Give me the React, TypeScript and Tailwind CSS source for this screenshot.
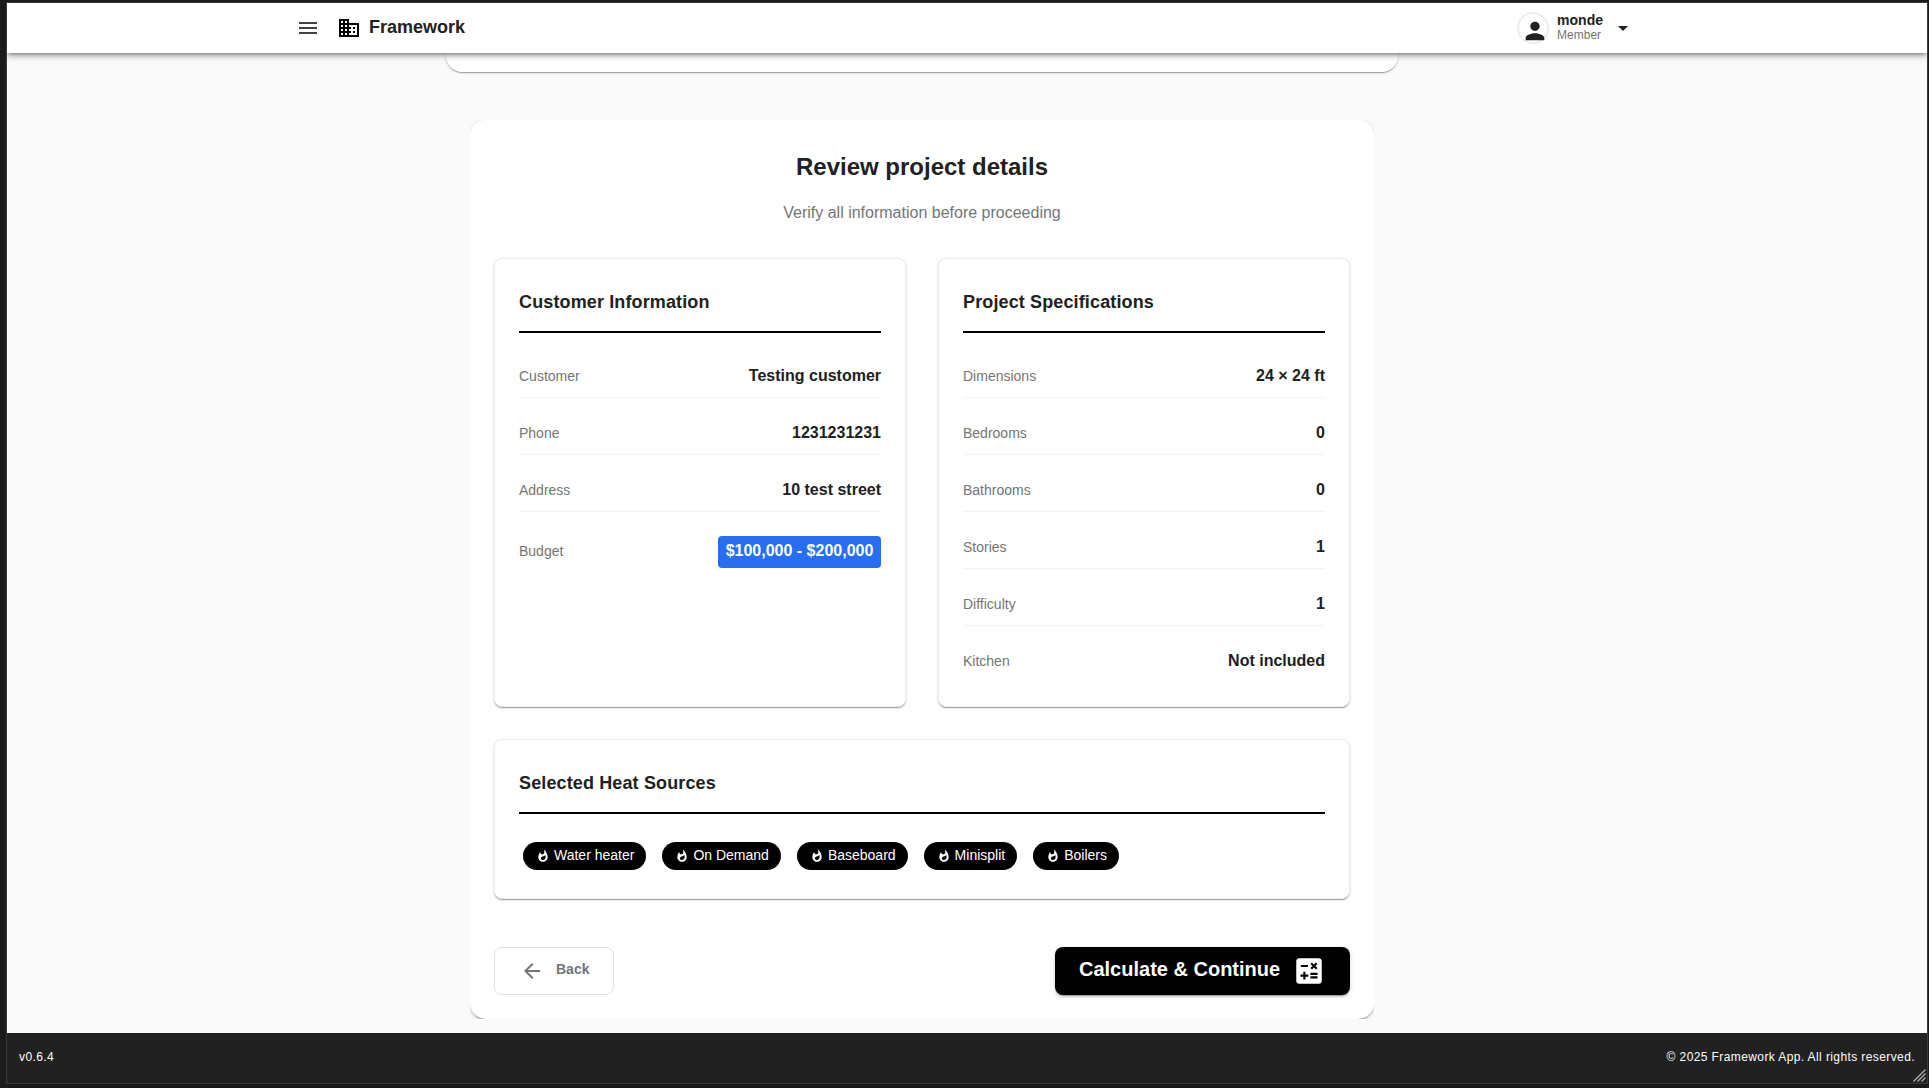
import type { ReactNode } from "react";
import { MdArrowBack, MdArrowDropDown, MdBusiness, MdCalculate, MdMenu, MdPerson, MdWhatshot } from "react-icons/md";

const customer = [
  ["Customer", "Testing customer"],
  ["Phone", "1231231231"],
  ["Address", "10 test street"],
];

const specs = [
  ["Dimensions", "24 × 24 ft"],
  ["Bedrooms", "0"],
  ["Bathrooms", "0"],
  ["Stories", "1"],
  ["Difficulty", "1"],
  ["Kitchen", "Not included"],
];

const heatSources = ["Water heater", "On Demand", "Baseboard", "Minisplit", "Boilers"];

function Card({ title, className = "", children }: { title: string; className?: string; children: ReactNode }) {
  return (
    <section
      className={`rounded-lg border border-[#eeeeee] bg-white px-6 pt-6 shadow-[0_2px_1px_-1px_rgba(0,0,0,0.2),0_1px_1px_0_rgba(0,0,0,0.14),0_1px_3px_0_rgba(0,0,0,0.12)] ${className}`}
    >
      <h3 className="h-[50px] border-b-2 border-black pt-[5px] text-lg leading-[28px] font-bold tracking-[0.13px]">
        {title}
      </h3>
      {children}
    </section>
  );
}

function Row({ label, value, last = false }: { label: string; value: string; last?: boolean }) {
  return (
    <div
      className={`flex h-[57px] items-start justify-between border-b pt-6 ${last ? "border-transparent" : "border-[#f3f3f3]"}`}
    >
      <span className="text-sm leading-[22px] text-[#757575]">{label}</span>
      <span className="text-base leading-[22px] font-bold">{value}</span>
    </div>
  );
}

export default function App() {
  return (
    <div className="h-[1088px] w-[1929px] overflow-hidden bg-[#1b1b1d] pt-[2px] pl-[6px] font-['Liberation_Sans',Arial,sans-serif] text-[#212121]">
      <div className="flex h-[1082px] w-[1922px] flex-col overflow-hidden border border-[#3a3a3c] bg-[#fafafa]">
        <header className="relative z-10 flex h-[50px] shrink-0 items-center justify-between bg-white pr-[292px] pl-[289px] shadow-[0_2px_4px_-1px_rgba(0,0,0,0.4),0_4px_5px_0_rgba(0,0,0,0.14),0_1px_10px_0_rgba(0,0,0,0.12)]">
          <div className="flex items-center">
            <MdMenu className="size-6 text-[#424242]" />
            <MdBusiness className="ml-[17px] size-6 text-black" />
            <span className="ml-2 pb-[2px] text-lg leading-[22px] font-bold">Framework</span>
          </div>
          <div className="flex items-center">
            <div className="flex size-8 items-center justify-center rounded-full border-2 border-[#eeeeee]">
              <MdPerson className="mt-[5px] ml-1 size-7 shrink-0" />
            </div>
            <div className="ml-2 flex flex-col pb-[2px]">
              <span className="text-sm leading-4 font-bold">monde</span>
              <span className="text-xs leading-[14px] text-[#757575]">Member</span>
            </div>
            <MdArrowDropDown className="ml-2 size-6" />
          </div>
        </header>

        <main className="flex flex-1 flex-col items-center pr-[90px]">
          <div className="h-[19px] w-[952px] rounded-b-2xl bg-white shadow-[0_2px_1px_-1px_rgba(0,0,0,0.2),0_1px_1px_0_rgba(0,0,0,0.14),0_1px_3px_0_rgba(0,0,0,0.12)]" />
          <div className="mt-12 h-[899px] w-[904px] overflow-hidden">
            <div className="flex h-full flex-col rounded-2xl bg-white px-6 shadow-[0_3px_1px_-2px_rgba(0,0,0,0.2),0_2px_2px_0_rgba(0,0,0,0.14),0_1px_5px_0_rgba(0,0,0,0.12)]">
              <h2 className="mt-[31px] text-center text-2xl leading-8 font-bold">Review project details</h2>
              <p className="mt-[18px] text-center text-base leading-6 text-[#757575]">
                Verify all information before proceeding
              </p>
              <div className="mt-[33px] grid h-[449px] shrink-0 grid-cols-2 gap-8">
                <Card title="Customer Information">
                  <div className="pt-2">
                    {customer.map(([label, value]) => (
                      <Row key={label} label={label} value={value} />
                    ))}
                    <div className="flex items-start justify-between pt-6">
                      <span className="pt-[3px] text-sm leading-6 text-[#757575]">Budget</span>
                      <span className="h-8 w-[163px] rounded bg-[#276ef1] text-center text-base leading-[29px] font-bold text-white">
                        $100,000 - $200,000
                      </span>
                    </div>
                  </div>
                </Card>
                <Card title="Project Specifications">
                  <div className="pt-2">
                    {specs.map(([label, value], i) => (
                      <Row key={label} label={label} value={value} last={i === specs.length - 1} />
                    ))}
                  </div>
                </Card>
              </div>
              <Card title="Selected Heat Sources" className="mt-8 h-[160px] shrink-0">
                <div className="flex gap-4 pt-[28px] pl-1">
                  {heatSources.map((name) => (
                    <span key={name} className="flex h-7 items-center rounded-full bg-black pr-3 pl-[13px] text-sm text-white">
                      <MdWhatshot className="mr-1 size-[14px]" />
                      <span className="pb-[2px] leading-5">{name}</span>
                    </span>
                  ))}
                </div>
              </Card>
              <div className="mt-12 flex justify-between">
                <button className="flex h-12 w-[120px] items-center rounded-lg border border-[#e0e0e0] pl-[25px] text-sm font-bold text-[#757575]">
                  <MdArrowBack className="size-6" />
                  <span className="ml-3 pb-[4px]">Back</span>
                </button>
                <button className="flex h-12 w-[295px] items-center rounded-lg bg-black pl-6 text-xl font-bold text-white shadow-[0_3px_1px_-2px_rgba(0,0,0,0.2),0_2px_2px_0_rgba(0,0,0,0.14),0_1px_5px_0_rgba(0,0,0,0.12)]">
                  <span className="pb-[4px]">Calculate &amp; Continue</span>
                  <MdCalculate className="ml-3 size-[34px]" />
                </button>
              </div>
            </div>
          </div>
        </main>

        <footer className="relative flex h-[50px] shrink-0 items-center justify-between bg-[#212121] px-3 pb-[3px] text-xs tracking-[0.4px] text-white">
          <span>v0.6.4</span>
          <span>© 2025 Framework App. All rights reserved.</span>
          <svg className="absolute right-px bottom-px" width="13" height="13" viewBox="0 0 13 13" stroke="#b5b5b5" strokeWidth="1.2">
            <path d="M0.5 12.5 12.5 0.5M4.5 12.5l8-8M8.5 12.5l4-4" />
          </svg>
        </footer>
      </div>
    </div>
  );
}
